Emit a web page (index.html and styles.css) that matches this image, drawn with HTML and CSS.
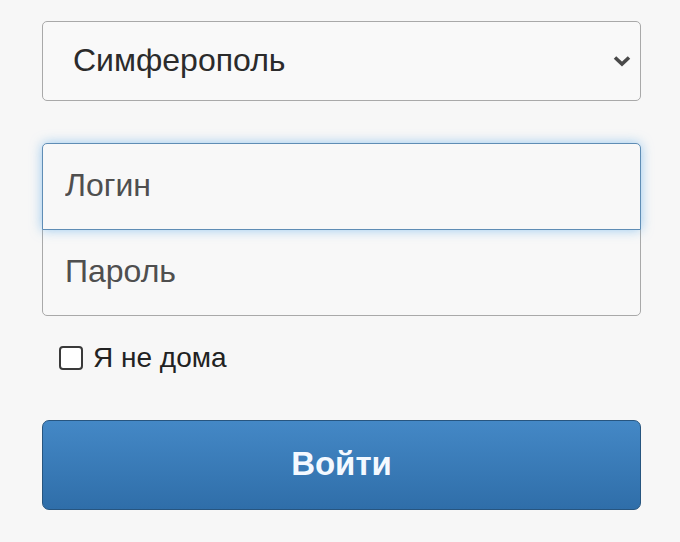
FILE: index.html
```html
<!DOCTYPE html>
<html>
<head>
    <title>Вход</title>
    <link rel="stylesheet" href="styles.css">
</head>
<body>
    <form class="login-form">
        <div class="select-box">
            <span class="select-value">Симферополь</span>
            <svg class="chevron" width="18" height="14" viewBox="0 0 18 14">
                <path d="M2 3.5 L9 10 L16 3.5" fill="none" stroke="#4a4a4a" stroke-width="3.6"/>
            </svg>
        </div>

        <div class="field-group">
            <input class="field field-top focused" type="text" placeholder="Логин">
            <input class="field field-bottom" type="password" placeholder="Пароль">
        </div>

        <label class="check-row">
            <span class="checkbox"></span>
            <span>Я не дома</span>
        </label>

        <button class="submit" type="button">Войти</button>
    </form>
</body>
</html>
```

FILE: styles.css
```css
body {
    margin: 0;
    background: #f7f7f7;
    font-family: "Liberation Sans", Arial, sans-serif;
}
.login-form {
    width: 599px;
    padding: 21px 0 0 42px;
    display: flex;
    flex-direction: column;
}
.select-box {
    box-sizing: border-box;
    height: 80px;
    border: 1px solid #a9a9a9;
    border-radius: 5px;
    background: #f9f9f9;
    display: flex;
    align-items: center;
    justify-content: space-between;
    padding: 0 9px 0 30px;
}
.select-value {
    font-size: 32px;
    color: #2b2b2b;
    padding-bottom: 2px;
}
.field-group {
    margin-top: 42px;
    display: flex;
    flex-direction: column;
}
.field {
    box-sizing: border-box;
    height: 87px;
    border: 1px solid #a9a9a9;
    background: #f8f8f8;
    padding: 0 0 2px 22px;
    font-family: "Liberation Sans", Arial, sans-serif;
    font-size: 32px;
    color: #333;
    outline: none;
}
.field::placeholder {
    color: #4f4f4f;
}
.field-top {
    border-radius: 5px 5px 0 0;
    position: relative;
    z-index: 1;
}
.field-bottom {
    margin-top: -1px;
    border-radius: 0 0 5px 5px;
}
.focused {
    border-color: #5f8db5;
    box-shadow: 0 0 12px rgba(102, 175, 233, 0.65);
}
.check-row {
    display: flex;
    align-items: center;
    gap: 10px;
    margin: 26px 0 0 17px;
    font-size: 28px;
    color: #222;
}
.checkbox {
    width: 20px;
    height: 20px;
    border: 2px solid #3a3a3a;
    border-radius: 4px;
    background: #fff;
}
.submit {
    margin-top: 46px;
    height: 90px;
    border: 1px solid #27557f;
    border-radius: 7px;
    background: linear-gradient(#4488c6, #2f6ea9);
    color: #f4f9ff;
    font-family: "Liberation Sans", Arial, sans-serif;
    font-size: 33px;
    font-weight: bold;
    padding-bottom: 4px;
}
```
